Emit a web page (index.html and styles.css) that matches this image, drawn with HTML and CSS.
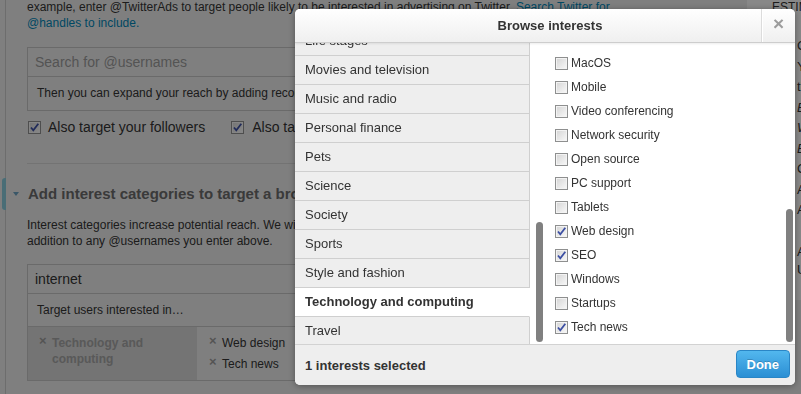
FILE: index.html
```html
<!DOCTYPE html>
<html lang="en">
<head>
    <meta charset="UTF-8"/>
    <title>Browse interests</title>
    <link rel="stylesheet" href="styles.css">
</head>
<body>
    <div class="page">
        <div class="rail"><div class="rail_mark"></div></div>

        <div class="main">
            <p class="intro">example, enter @TwitterAds to target people likely to be interested in advertising on Twitter. <a href="#">Search Twitter for @handles to include.</a></p>

            <div class="search_box">
                <div class="search_input">Search for @usernames</div>
                <div class="search_hint">Then you can expand your reach by adding recommended users</div>
            </div>

            <div class="follow_opts">
                <label class="opt"><span class="cb on"><svg viewBox="0 0 11 11"><path d="M2 5.5 L4.3 8.3 L9.3 1.8"/></svg></span>Also target your followers</label>
                <label class="opt"><span class="cb on"><svg viewBox="0 0 11 11"><path d="M2 5.5 L4.3 8.3 L9.3 1.8"/></svg></span>Also target users like your followers</label>
            </div>

            <div class="divider"></div>

            <div class="section_head"><span class="caret"></span>Add interest categories to target a broader audience</div>
            <p class="section_text">Interest categories increase potential reach. We will target these categories in<br>addition to any @usernames you enter above.</p>

            <div class="interest_box">
                <div class="interest_input">internet</div>
                <div class="search_hint">Target users interested in…</div>
                <div class="picked">
                    <div class="picked_cat">
                        <div class="tag"><span class="tag_x">×</span><span class="tag_text">Technology and computing</span></div>
                    </div>
                    <div class="picked_subs">
                        <div class="tag"><span class="tag_x">×</span><span>Web design</span></div>
                        <div class="tag"><span class="tag_x">×</span><span>Tech news</span></div>
                    </div>
                </div>
            </div>
        </div>

        <aside class="side">
            <div class="side_title">ESTIMATED REACH</div>
            <ul class="side_list">
                <li>GEO</li>
                <li>Your</li>
                <li>the</li>
                <li><em>Est</em></li>
                <li><em>Wor</em></li>
                <li><em>Est</em></li>
                <li>Cou</li>
                <li>All</li>
                <li>All</li>
            </ul>
            <ul class="side_list side_list_low">
                <li>All</li>
                <li>Use</li>
            </ul>
        </aside>
    </div>

    <div class="overlay"></div>

    <div class="modal">
        <div class="modal_head">
            <div class="modal_title">Browse interests</div>
            <div class="modal_close">×</div>
        </div>

        <div class="modal_body">
            <ul class="cats">
                <li>Life stages</li>
                <li>Movies and television</li>
                <li>Music and radio</li>
                <li>Personal finance</li>
                <li>Pets</li>
                <li>Science</li>
                <li>Society</li>
                <li>Sports</li>
                <li>Style and fashion</li>
                <li class="current">Technology and computing</li>
                <li>Travel</li>
            </ul>

            <ul class="subs">
                <li><span class="cb"></span>MacOS</li>
                <li><span class="cb"></span>Mobile</li>
                <li><span class="cb"></span>Video conferencing</li>
                <li><span class="cb"></span>Network security</li>
                <li><span class="cb"></span>Open source</li>
                <li><span class="cb"></span>PC support</li>
                <li><span class="cb"></span>Tablets</li>
                <li><span class="cb on"><svg viewBox="0 0 11 11"><path d="M2 5.5 L4.3 8.3 L9.3 1.8"/></svg></span>Web design</li>
                <li><span class="cb on"><svg viewBox="0 0 11 11"><path d="M2 5.5 L4.3 8.3 L9.3 1.8"/></svg></span>SEO</li>
                <li><span class="cb"></span>Windows</li>
                <li><span class="cb"></span>Startups</li>
                <li><span class="cb on"><svg viewBox="0 0 11 11"><path d="M2 5.5 L4.3 8.3 L9.3 1.8"/></svg></span>Tech news</li>
            </ul>

            <div class="scroll_thumb thumb_cats"></div>
            <div class="scroll_thumb thumb_subs"></div>
        </div>

        <div class="modal_foot">
            <span class="selected_count">1 interests selected</span>
            <button class="done_btn">Done</button>
        </div>
    </div>
</body>
</html>
```

FILE: styles.css
```css
* {
    box-sizing: border-box;
}

html, body {
    margin: 0;
    height: 100%;
}

body {
    font-family: "Liberation Sans", Arial, sans-serif;
    color: #333;
    background: #e8e8e8;
    overflow: hidden;
}

/* page behind the dialog */
.page {
    display: flex;
    height: 394px;
}

.rail {
    width: 6px;
    flex: none;
    border-right: 1px solid #c6c6c6;
    padding-top: 178px;
}

.rail_mark {
    width: 4px;
    height: 32px;
    margin-left: 2px;
    background: #86c6d8;
    border-radius: 3px 0 0 3px;
}

.main {
    flex: 1;
    min-width: 0;
    padding: 0 97px 0 21px;
}

.intro {
    margin: -1px 0 0;
    font-size: 12px;
    line-height: 16px;
}

.intro a {
    color: #0084b4;
    text-decoration: none;
}

.search_box,
.interest_box {
    border: 1px solid #c2c2c2;
}

.search_box {
    margin-top: 16px;
}

.search_input,
.interest_input {
    height: 29px;
    line-height: 28px;
    padding-left: 7px;
    font-size: 14px;
    border-bottom: 1px solid #c2c2c2;
}

.search_input {
    color: #999;
}

.search_hint {
    height: 33px;
    line-height: 32px;
    padding-left: 9px;
    font-size: 12px;
    white-space: nowrap;
    overflow: hidden;
}

.interest_box .search_hint {
    border-bottom: 1px solid #c2c2c2;
}

.follow_opts {
    display: flex;
    margin-top: 7px;
    font-size: 14px;
    line-height: 18px;
    white-space: nowrap;
}

.opt {
    display: flex;
    align-items: center;
    gap: 7px;
}

.opt .cb {
    margin-left: 1px;
}

.opt + .opt {
    margin-left: 25px;
    gap: 8px;
}

.divider {
    height: 1px;
    margin-top: 27px;
    background: #d2d2d2;
}

.section_head {
    display: flex;
    align-items: center;
    margin-top: 20px;
    font-size: 15px;
    font-weight: bold;
    line-height: 20px;
    color: #6a6a6a;
    white-space: nowrap;
}

.caret {
    width: 0;
    height: 0;
    border-style: solid;
    border-width: 4px 3px 0;
    border-color: #6b9fbd transparent transparent;
    margin: 0 9px 0 -14px;
}

.section_text {
    margin: 13px 0 0;
    font-size: 12px;
    line-height: 16px;
}

.interest_box {
    margin-top: 15px;
}

.picked {
    display: flex;
    height: 53px;
    font-size: 12px;
    line-height: 16px;
}

.picked_cat {
    width: 169px;
    flex: none;
    background: #d3d3d3;
    padding: 8px 0 0 11px;
}

.picked_subs {
    display: flex;
    flex-direction: column;
    gap: 5px;
    padding: 8px 0 0 12px;
}

.tag {
    display: flex;
    align-items: flex-start;
}

.tag_x {
    width: 13px;
    flex: none;
    font-size: 13px;
    font-weight: bold;
    line-height: 11px;
    color: #9a9a9a;
}

.picked_cat .tag_text {
    font-weight: bold;
    color: #a2a2a2;
}

.side {
    width: 54px;
    flex: none;
    height: 300px;
    background: #f7f7f7;
    padding-left: 25px;
    font-size: 13px;
    overflow: hidden;
    white-space: nowrap;
}

.side_title {
    margin-top: -1px;
    line-height: 16px;
    font-size: 12px;
}

.side_list {
    list-style: none;
    margin: 21px 0 0;
    padding: 0 0 0 25px;
    line-height: 20.5px;
}

.side_list_low {
    margin-top: 22px;
    line-height: 18px;
}

/* checkbox, old windows look */
.cb {
    width: 13px;
    height: 13px;
    flex: none;
    display: flex;
    border: 1px solid #8e8f8f;
    background: linear-gradient(135deg, #d4d4d4, #f9f9f9);
    box-shadow: inset 0 0 0 1px #f3f3f3;
}

.cb svg {
    width: 11px;
    height: 11px;
}

.cb path {
    fill: none;
    stroke: #3c4fa3;
    stroke-width: 1.8;
}

/* dialog */
.overlay {
    position: fixed;
    inset: 0;
    background: rgba(0, 0, 0, 0.45);
}

.modal {
    position: absolute;
    left: 295px;
    top: 9px;
    width: 500px;
    height: 376px;
    display: flex;
    flex-direction: column;
    background: #fff;
    border-radius: 5px;
    box-shadow: 0 1px 6px rgba(0, 0, 0, 0.35);
    overflow: hidden;
    font-size: 13px;
}

.modal_head {
    height: 34px;
    flex: none;
    display: flex;
    position: relative;
    z-index: 1;
    background: linear-gradient(#fff, #efefef);
    border-bottom: 1px solid #cdcdcd;
    box-shadow: 0 1px 2px rgba(0, 0, 0, 0.08);
}

.modal_title {
    flex: 1;
    padding-left: 44px;
    text-align: center;
    line-height: 33px;
    font-weight: bold;
}

.modal_close {
    width: 34px;
    border-left: 1px solid #dcdcdc;
    box-shadow: inset 1px 0 0 #fff;
    text-align: center;
    line-height: 30px;
    font-size: 19px;
    font-weight: bold;
    color: #9c9c9c;
}

.modal_body {
    flex: 1;
    display: flex;
    position: relative;
    overflow: hidden;
}

.cats {
    width: 235px;
    flex: none;
    list-style: none;
    margin: -16px 0 0;
    padding: 0;
}

.cats li {
    height: 29px;
    line-height: 28px;
    padding-left: 10px;
    background: #eee;
    border-bottom: 1px solid #cfcfcf;
    border-right: 1px solid #cfcfcf;
}

.cats li.current {
    background: #fff;
    border-right-color: #fff;
    font-weight: bold;
}

.subs {
    list-style: none;
    margin: 0;
    padding: 8px 0 0 25px;
    font-size: 12px;
}

.subs li {
    height: 24px;
    display: flex;
    align-items: center;
    gap: 3px;
}

.scroll_thumb {
    position: absolute;
    width: 7px;
    background: #808080;
    border-radius: 4px;
}

.thumb_cats {
    left: 241px;
    top: 179px;
    height: 120px;
}

.thumb_subs {
    left: 491px;
    top: 166px;
    height: 133px;
}

.modal_foot {
    height: 41px;
    flex: none;
    display: flex;
    align-items: center;
    justify-content: space-between;
    padding: 0 5px 0 10px;
    background: #eee;
    border-top: 1px solid #d2d2d2;
}

.selected_count {
    font-weight: bold;
}

.done_btn {
    height: 28px;
    margin-top: -2px;
    padding: 0 10px;
    border: 1px solid #2a86c6;
    border-radius: 4px;
    background: linear-gradient(#52b7ee, #2b8fd4);
    color: #fff;
    font: bold 13px "Liberation Sans", Arial, sans-serif;
    text-shadow: 0 -1px 0 rgba(0, 0, 0, 0.2);
}
```
